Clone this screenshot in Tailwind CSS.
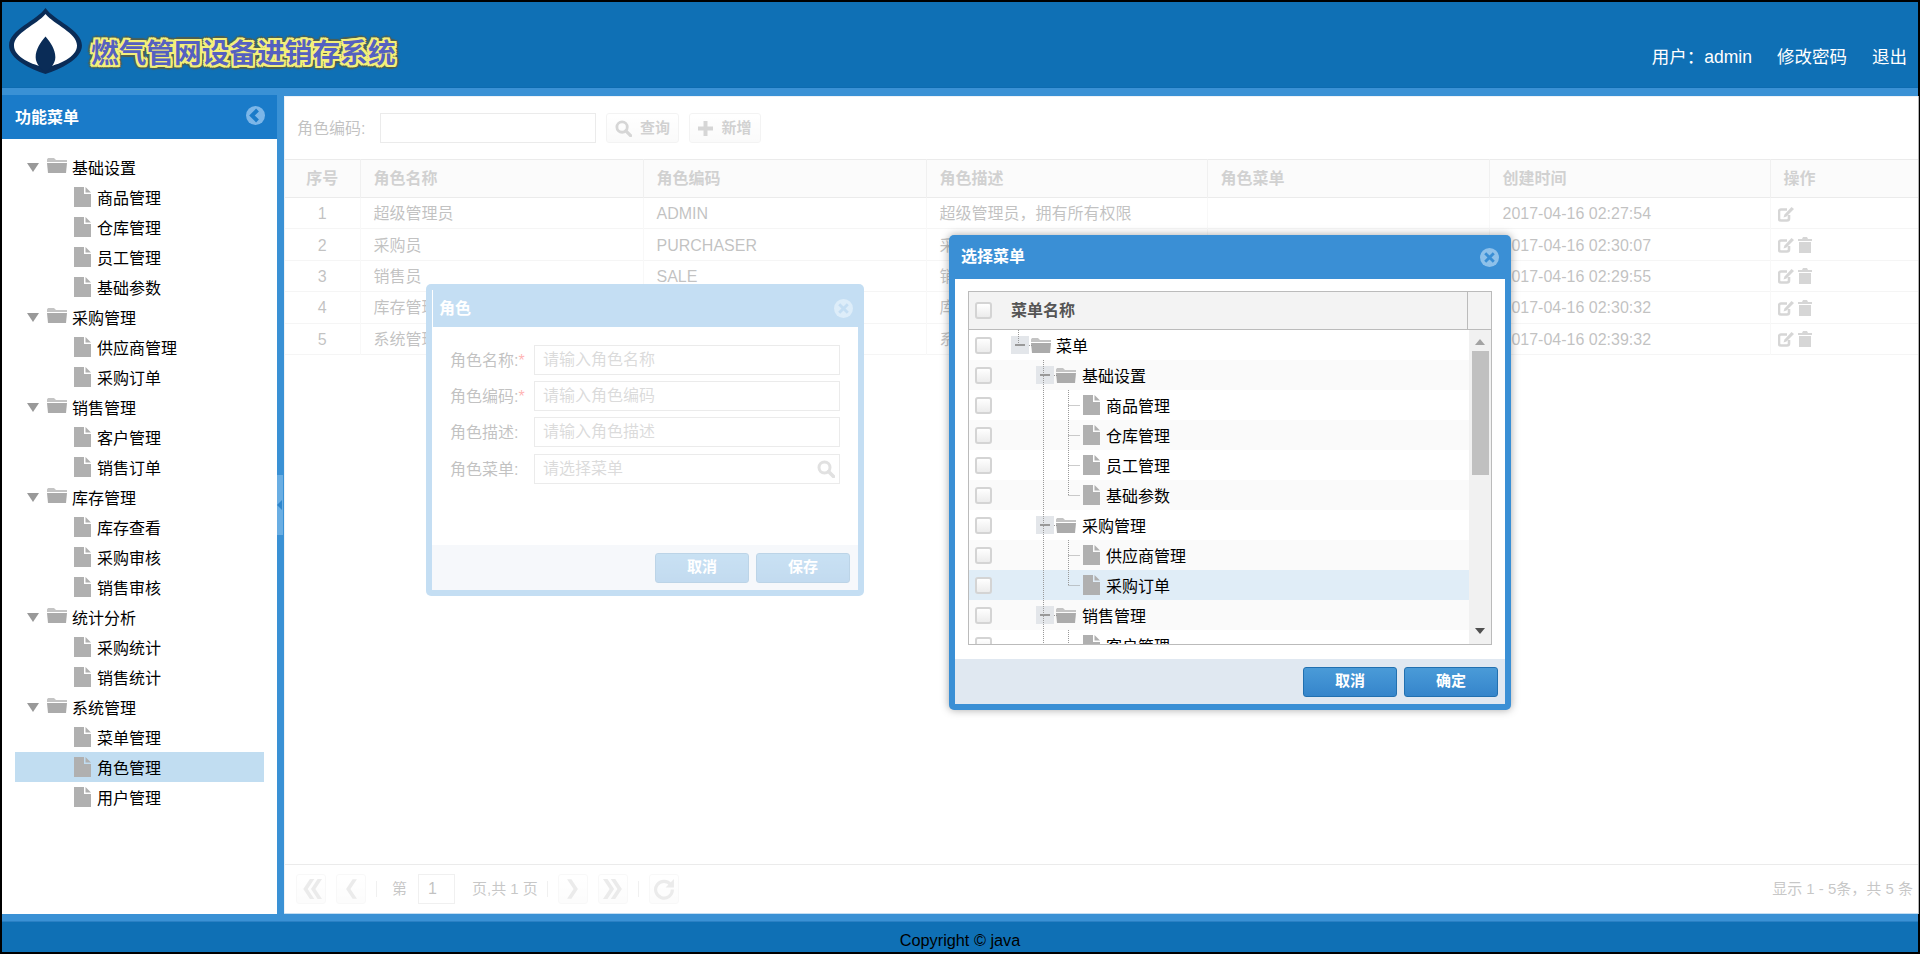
<!DOCTYPE html>
<html lang="zh-CN">
  <head>
    <meta charset="UTF-8" />
    <meta name="viewport" content="width=device-width, initial-scale=1.0" />
    <title>燃气管网设备进销存系统</title>
    <script src="https://cdn.jsdelivr.net/npm/@tailwindcss/browser@4"></script>
  </head>
  <body class="bg-black p-[2px] h-[954px] w-[1920px] overflow-hidden text-[16px] [font-family:'Liberation_Sans','Noto_Sans_CJK_SC',sans-serif]">
    <!-- shared icons -->
    <svg class="hidden">
      <symbol id="i-folder" viewBox="0 0 20 15"><path d="M0 1.5 1 0h6l2 2h11v2H0z" fill="#c4c4c4" /><path d="M0 5h20l-1 10H1z" fill="#ababab" /></symbol>
      <symbol id="i-file" viewBox="0 0 17 20"><path d="M0 0h10v7h7v13H0z" fill="#b0b0b0" /><path d="M11.5 0 17 5.5h-5.5z" fill="#b0b0b0" /></symbol>
      <symbol id="i-search" viewBox="0 0 18 18"><circle cx="7.5" cy="7.5" r="5.5" fill="none" stroke="currentColor" stroke-width="3" /><path d="m11.5 11.5 5 5" stroke="currentColor" stroke-width="3.5" stroke-linecap="round" /></symbol>
      <symbol id="i-edit" viewBox="0 0 16 15"><path d="M11 8v3.5a2 2 0 0 1-2 2H3a2 2 0 0 1-2-2v-7a2 2 0 0 1 2-2h6" fill="none" stroke="currentColor" stroke-width="2.6" /><path d="M13.5 0 16 2 8.5 9.5 5.5 10.5 6.5 7.5z" fill="currentColor" /></symbol>
      <symbol id="i-trash" viewBox="0 0 14 16"><path d="M5 0h4l1 2h4v2H0V2h4z" fill="currentColor" /><path d="M1 5h12v11H1z" fill="currentColor" /></symbol>
      <symbol id="i-close" viewBox="0 0 20 20"><circle cx="10" cy="10" r="10" fill="currentColor" /><path d="m5.5 5.5 9 9m0-9-9 9" stroke="#3a8fd5" stroke-width="3" /></symbol>
    </svg>

    <div class="h-[950px] w-[1916px] bg-[#3a91d5] flex flex-col">
      <!-- header -->
      <header class="h-[86px] bg-[#0f70b5] border-b border-[#0d6bb0] flex items-start justify-between text-white shrink-0">
        <div class="flex items-end pl-[7px] pt-[6px]">
          <svg class="w-[73px] h-[66px]" viewBox="0 0 74 67">
            <path d="M37 0C46 13 74 22 74 38 74 52 52 62 37 67 22 62 0 52 0 38 0 22 28 13 37 0Z" fill="#0a2c57" />
            <path d="M37 6C46 17 69 25 69 38 69 50 50 58 37 60 24 58 5 50 5 38 5 25 28 17 37 6Z" fill="#fff" />
            <path d="M37 29C42 35 47 42 47 50 47 57 41 62 37 66 33 62 27 57 27 50 27 42 32 35 37 29Z" fill="#0a2c57" />
          </svg>
          <span class="ml-[9px] mb-[2px] text-[27.7px] leading-[36px] font-bold text-[#5560c0] [text-shadow:1px_0_0_#f4f07a,-1px_0_0_#f4f07a,0_1px_0_#f4f07a,0_-1px_0_#f4f07a,2px_0_0_#f4f07a,-2px_0_0_#f4f07a,0_2px_0_#f4f07a,0_-2px_0_#f4f07a,2px_2px_0_#f4f07a,-2px_-2px_0_#f4f07a,2px_-2px_0_#f4f07a,-2px_2px_0_#f4f07a,3px_3px_1px_#4f5f50,-3px_-3px_1px_#4f5f50,3px_-3px_1px_#4f5f50,-3px_3px_1px_#4f5f50,4px_0_1px_#4f5f50,-4px_0_1px_#4f5f50,0_4px_1px_#4f5f50,0_-4px_1px_#4f5f50]">燃气管网设备进销存系统</span>
        </div>
        <div class="flex gap-[25px] pt-[43px] pr-[11px] text-[17.5px] leading-[24px]">
          <span>用户：admin</span>
          <span>修改密码</span>
          <span>退出</span>
        </div>
      </header>

      <div class="flex flex-1 pt-[8px] min-h-0">
        <!-- left menu -->
        <aside class="w-[275px] bg-white flex flex-col shrink-0 -mt-px -mb-px">
          <div class="h-[44px] bg-[#1a7bc9] flex items-center justify-between pl-[13px] pr-[12px] text-white font-bold">
            <span class="leading-[20px] pt-[2px]">功能菜单</span>
            <svg class="w-[19px] h-[19px] -mt-[3px]" viewBox="0 0 19 19">
              <circle cx="9.5" cy="9.5" r="9.5" fill="#7cb6e8" />
              <path d="M11.5 4 6 9.5l5.500 5.500" fill="none" stroke="#1a7bc9" stroke-width="4" />
            </svg>
          </div>
          <nav class="px-[13px] pt-[13px] text-black leading-[20px] [&_span]:pt-[4px]">
            <div class="h-[30px] flex items-center pl-[12px]"><svg class="w-[12px] h-[9px]" viewBox="0 0 12 9"><path d="M0 0h12L6 9z" fill="#999" /></svg><svg class="w-[20px] h-[15px] ml-[8px] -mt-[3px]"><use href="#i-folder" /></svg><span class="ml-[5px]">基础设置</span></div>
            <div class="h-[30px] flex items-center pl-[59px]"><svg class="w-[17px] h-[20px]"><use href="#i-file" /></svg><span class="ml-[6px]">商品管理</span></div>
            <div class="h-[30px] flex items-center pl-[59px]"><svg class="w-[17px] h-[20px]"><use href="#i-file" /></svg><span class="ml-[6px]">仓库管理</span></div>
            <div class="h-[30px] flex items-center pl-[59px]"><svg class="w-[17px] h-[20px]"><use href="#i-file" /></svg><span class="ml-[6px]">员工管理</span></div>
            <div class="h-[30px] flex items-center pl-[59px]"><svg class="w-[17px] h-[20px]"><use href="#i-file" /></svg><span class="ml-[6px]">基础参数</span></div>
            <div class="h-[30px] flex items-center pl-[12px]"><svg class="w-[12px] h-[9px]" viewBox="0 0 12 9"><path d="M0 0h12L6 9z" fill="#999" /></svg><svg class="w-[20px] h-[15px] ml-[8px] -mt-[3px]"><use href="#i-folder" /></svg><span class="ml-[5px]">采购管理</span></div>
            <div class="h-[30px] flex items-center pl-[59px]"><svg class="w-[17px] h-[20px]"><use href="#i-file" /></svg><span class="ml-[6px]">供应商管理</span></div>
            <div class="h-[30px] flex items-center pl-[59px]"><svg class="w-[17px] h-[20px]"><use href="#i-file" /></svg><span class="ml-[6px]">采购订单</span></div>
            <div class="h-[30px] flex items-center pl-[12px]"><svg class="w-[12px] h-[9px]" viewBox="0 0 12 9"><path d="M0 0h12L6 9z" fill="#999" /></svg><svg class="w-[20px] h-[15px] ml-[8px] -mt-[3px]"><use href="#i-folder" /></svg><span class="ml-[5px]">销售管理</span></div>
            <div class="h-[30px] flex items-center pl-[59px]"><svg class="w-[17px] h-[20px]"><use href="#i-file" /></svg><span class="ml-[6px]">客户管理</span></div>
            <div class="h-[30px] flex items-center pl-[59px]"><svg class="w-[17px] h-[20px]"><use href="#i-file" /></svg><span class="ml-[6px]">销售订单</span></div>
            <div class="h-[30px] flex items-center pl-[12px]"><svg class="w-[12px] h-[9px]" viewBox="0 0 12 9"><path d="M0 0h12L6 9z" fill="#999" /></svg><svg class="w-[20px] h-[15px] ml-[8px] -mt-[3px]"><use href="#i-folder" /></svg><span class="ml-[5px]">库存管理</span></div>
            <div class="h-[30px] flex items-center pl-[59px]"><svg class="w-[17px] h-[20px]"><use href="#i-file" /></svg><span class="ml-[6px]">库存查看</span></div>
            <div class="h-[30px] flex items-center pl-[59px]"><svg class="w-[17px] h-[20px]"><use href="#i-file" /></svg><span class="ml-[6px]">采购审核</span></div>
            <div class="h-[30px] flex items-center pl-[59px]"><svg class="w-[17px] h-[20px]"><use href="#i-file" /></svg><span class="ml-[6px]">销售审核</span></div>
            <div class="h-[30px] flex items-center pl-[12px]"><svg class="w-[12px] h-[9px]" viewBox="0 0 12 9"><path d="M0 0h12L6 9z" fill="#999" /></svg><svg class="w-[20px] h-[15px] ml-[8px] -mt-[3px]"><use href="#i-folder" /></svg><span class="ml-[5px]">统计分析</span></div>
            <div class="h-[30px] flex items-center pl-[59px]"><svg class="w-[17px] h-[20px]"><use href="#i-file" /></svg><span class="ml-[6px]">采购统计</span></div>
            <div class="h-[30px] flex items-center pl-[59px]"><svg class="w-[17px] h-[20px]"><use href="#i-file" /></svg><span class="ml-[6px]">销售统计</span></div>
            <div class="h-[30px] flex items-center pl-[12px]"><svg class="w-[12px] h-[9px]" viewBox="0 0 12 9"><path d="M0 0h12L6 9z" fill="#999" /></svg><svg class="w-[20px] h-[15px] ml-[8px] -mt-[3px]"><use href="#i-folder" /></svg><span class="ml-[5px]">系统管理</span></div>
            <div class="h-[30px] flex items-center pl-[59px]"><svg class="w-[17px] h-[20px]"><use href="#i-file" /></svg><span class="ml-[6px]">菜单管理</span></div>
            <div class="h-[30px] flex items-center pl-[59px] bg-[#c1ddf1]"><svg class="w-[17px] h-[20px]"><use href="#i-file" /></svg><span class="ml-[6px]">角色管理</span></div>
            <div class="h-[30px] flex items-center pl-[59px]"><svg class="w-[17px] h-[20px]"><use href="#i-file" /></svg><span class="ml-[6px]">用户管理</span></div>
          </nav>
        </aside>

        <!-- splitter -->
        <div class="w-[7px] shrink-0 flex items-center">
          <div class="w-[6px] h-[60px] bg-[#6aaee3] flex items-center">
            <svg class="w-[5px] h-[10px]" viewBox="0 0 5 10"><path d="M5 0v10L0 5z" fill="#2f86cc" /></svg>
          </div>
        </div>

        <!-- content -->
        <main class="relative flex-1 bg-white flex flex-col border-l border-t border-[#c4d4e4] min-w-0">
          <div class="h-[62px] flex items-center pl-[12px] gap-[10px] shrink-0">
            <span class="text-[#333] leading-[20px] w-[73px] pt-[2px]">角色编码:</span>
            <input class="w-[216px] h-[30px] border border-[#bbb] bg-white" />
            <button class="w-[73px] h-[30px] rounded-[3px] border border-[#d8d8d8] bg-linear-to-b from-white to-[#eee] flex items-center justify-center gap-[8px] font-bold text-[15px] text-[#666]"><svg class="w-[17px] h-[17px] text-[#777]"><use href="#i-search" /></svg>查询</button>
            <button class="w-[72px] h-[30px] rounded-[3px] border border-[#d8d8d8] bg-linear-to-b from-white to-[#eee] flex items-center justify-center gap-[8px] font-bold text-[15px] text-[#666]"><svg class="w-[15px] h-[15px]" viewBox="0 0 15 15"><path d="M5.500 0h4v5.500H15v4H9.500V15h-4V9.500H0v-4h5.500z" fill="#777" /></svg>新增</button>
          </div>

          <div class="flex-1 min-h-0">
            <table class="w-full table-fixed border-collapse">
              <colgroup>
                <col class="w-[75px]" />
                <col class="w-[283px]" />
                <col class="w-[283px]" />
                <col class="w-[281px]" />
                <col class="w-[282px]" />
                <col class="w-[281px]" />
                <col />
              </colgroup>
              <thead class="bg-[#f0f0f0] text-[#666]">
                <tr class="h-[38px] border-y border-[#bbb]">
                  <th class="font-bold">序号</th>
                  <th class="font-bold text-left px-[13px] border-l border-[#ccc]">角色名称</th>
                  <th class="font-bold text-left px-[13px] border-l border-[#ccc]">角色编码</th>
                  <th class="font-bold text-left px-[13px] border-l border-[#ccc]">角色描述</th>
                  <th class="font-bold text-left px-[13px] border-l border-[#ccc]">角色菜单</th>
                  <th class="font-bold text-left px-[13px] border-l border-[#ccc]">创建时间</th>
                  <th class="font-bold text-left px-[13px] border-l border-[#ccc]">操作</th>
                </tr>
              </thead>
              <tbody class="text-[#333] [&_td]:pt-[2px]">
                <tr class="h-[31.4px] border-b border-[#ddd]">
                  <td class="text-center">1</td>
                  <td class="px-[13px] border-l border-[#e6e6e6]">超级管理员</td>
                  <td class="px-[13px] border-l border-[#e6e6e6]">ADMIN</td>
                  <td class="px-[13px] border-l border-[#e6e6e6]">超级管理员，拥有所有权限</td>
                  <td class="px-[13px] border-l border-[#e6e6e6]"></td>
                  <td class="px-[13px] border-l border-[#e6e6e6]">2017-04-16 02:27:54</td>
                  <td class="pl-[7px] border-l border-[#e6e6e6]"><div class="flex gap-[4px] text-[#777]"><svg class="w-[16px] h-[15px]"><use href="#i-edit" /></svg></div></td>
                </tr>
                <tr class="h-[31.4px] border-b border-[#ddd]">
                  <td class="text-center">2</td>
                  <td class="px-[13px] border-l border-[#e6e6e6]">采购员</td>
                  <td class="px-[13px] border-l border-[#e6e6e6]">PURCHASER</td>
                  <td class="px-[13px] border-l border-[#e6e6e6]">采购员</td>
                  <td class="px-[13px] border-l border-[#e6e6e6]"></td>
                  <td class="px-[13px] border-l border-[#e6e6e6]">2017-04-16 02:30:07</td>
                  <td class="pl-[7px] border-l border-[#e6e6e6]"><div class="flex gap-[4px] text-[#777]"><svg class="w-[16px] h-[15px]"><use href="#i-edit" /></svg><svg class="w-[14px] h-[16px] -mt-[1px]"><use href="#i-trash" /></svg></div></td>
                </tr>
                <tr class="h-[31.4px] border-b border-[#ddd]">
                  <td class="text-center">3</td>
                  <td class="px-[13px] border-l border-[#e6e6e6]">销售员</td>
                  <td class="px-[13px] border-l border-[#e6e6e6]">SALE</td>
                  <td class="px-[13px] border-l border-[#e6e6e6]">销售员</td>
                  <td class="px-[13px] border-l border-[#e6e6e6]"></td>
                  <td class="px-[13px] border-l border-[#e6e6e6]">2017-04-16 02:29:55</td>
                  <td class="pl-[7px] border-l border-[#e6e6e6]"><div class="flex gap-[4px] text-[#777]"><svg class="w-[16px] h-[15px]"><use href="#i-edit" /></svg><svg class="w-[14px] h-[16px] -mt-[1px]"><use href="#i-trash" /></svg></div></td>
                </tr>
                <tr class="h-[31.4px] border-b border-[#ddd]">
                  <td class="text-center">4</td>
                  <td class="px-[13px] border-l border-[#e6e6e6]">库存管理员</td>
                  <td class="px-[13px] border-l border-[#e6e6e6]">STOCK</td>
                  <td class="px-[13px] border-l border-[#e6e6e6]">库存管理员</td>
                  <td class="px-[13px] border-l border-[#e6e6e6]"></td>
                  <td class="px-[13px] border-l border-[#e6e6e6]">2017-04-16 02:30:32</td>
                  <td class="pl-[7px] border-l border-[#e6e6e6]"><div class="flex gap-[4px] text-[#777]"><svg class="w-[16px] h-[15px]"><use href="#i-edit" /></svg><svg class="w-[14px] h-[16px] -mt-[1px]"><use href="#i-trash" /></svg></div></td>
                </tr>
                <tr class="h-[31.4px] border-b border-[#ddd]">
                  <td class="text-center">5</td>
                  <td class="px-[13px] border-l border-[#e6e6e6]">系统管理员</td>
                  <td class="px-[13px] border-l border-[#e6e6e6]">SYSTEM</td>
                  <td class="px-[13px] border-l border-[#e6e6e6]">系统管理员</td>
                  <td class="px-[13px] border-l border-[#e6e6e6]"></td>
                  <td class="px-[13px] border-l border-[#e6e6e6]">2017-04-16 02:39:32</td>
                  <td class="pl-[7px] border-l border-[#e6e6e6]"><div class="flex gap-[4px] text-[#777]"><svg class="w-[16px] h-[15px]"><use href="#i-edit" /></svg><svg class="w-[14px] h-[16px] -mt-[1px]"><use href="#i-trash" /></svg></div></td>
                </tr>
              </tbody>
            </table>
          </div>

          <!-- pager -->
          <div class="h-[49px] border-t border-[#bbb] flex items-center pl-[11px] pr-[5px] text-[15px] text-[#444] shrink-0">
            <button class="w-[30px] h-[30px] rounded-[3px] border border-[#e6e6e6] bg-linear-to-b from-white to-[#f4f4f4] flex items-center justify-center"><svg class="w-[22px] h-[20px]" viewBox="0 0 20 18"><path d="M9 0 3 9l6 9h4L7 9l6-9zM16 0l-6 9 6 9h4l-6-9 6-9z" fill="#bbb" /></svg></button>
            <button class="ml-[10px] w-[30px] h-[30px] rounded-[3px] border border-[#e6e6e6] bg-linear-to-b from-white to-[#f4f4f4] flex items-center justify-center"><svg class="w-[13px] h-[20px]" viewBox="0 0 12 18"><path d="M7 0 1 9l6 9h4L5 9l6-9z" fill="#bbb" /></svg></button>
            <span class="ml-[10px] w-px h-[16px] bg-[#ccc]"></span>
            <span class="ml-[15px]">第</span>
            <input class="ml-[11px] w-[37px] h-[30px] border border-[#ccc] px-[9px] text-[16px] text-[#333]" value="1" />
            <span class="ml-[17px]">页,共 1 页</span>
            <span class="ml-[9px] w-px h-[16px] bg-[#ccc]"></span>
            <button class="ml-[10px] w-[30px] h-[30px] rounded-[3px] border border-[#e6e6e6] bg-linear-to-b from-white to-[#f4f4f4] flex items-center justify-center"><svg class="w-[13px] h-[20px]" viewBox="0 0 12 18"><path d="M5 0l6 9-6 9H1l6-9-6-9z" fill="#bbb" /></svg></button>
            <button class="ml-[10px] w-[30px] h-[30px] rounded-[3px] border border-[#e6e6e6] bg-linear-to-b from-white to-[#f4f4f4] flex items-center justify-center"><svg class="w-[22px] h-[20px]" viewBox="0 0 18 18"><path d="M4 0l6 9-6 9H0l6-9-6-9zM11 0l6 9-6 9H7l6-9-6-9z" fill="#bbb" /></svg></button>
            <span class="ml-[10px] w-px h-[16px] bg-[#ccc]"></span>
            <button class="ml-[10px] w-[30px] h-[30px] rounded-[3px] border border-[#e6e6e6] bg-linear-to-b from-white to-[#f4f4f4] flex items-center justify-center"><svg class="w-[22px] h-[22px]" viewBox="0 0 21 21"><path d="M17 6.5A8 8 0 1 0 18.5 11" fill="none" stroke="#bbb" stroke-width="3" /><path d="M20 1v8h-8z" fill="#bbb" /></svg></button>
            <span class="ml-auto">显示 1 - 5条，共 5 条</span>
          </div>

          <!-- dialog behind the mask -->
          <section class="absolute left-[141px] top-[187px] w-[438px] h-[312px] rounded-[5px] bg-[#3a91d5] px-[6px] pb-[6px] flex flex-col">
            <div class="h-[37px] flex items-center justify-between pl-[6px] pr-[5px] text-white font-bold border-l border-white mt-[6px]">
              <span>角色</span>
              <svg class="w-[19px] h-[19px] text-[#8ec1ea]"><use href="#i-close" /></svg>
            </div>
            <div class="flex-1 bg-white flex flex-col">
              <form class="flex-1 pl-[18px] pt-[18px] text-[#333]">
                <div class="flex items-center h-[30px]"><label class="w-[84px] pt-[1px]">角色名称:<span class="text-[#f00]">*</span></label><input class="w-[306px] h-[30px] border border-[#bbb] px-[8px] placeholder:text-[#888]" placeholder="请输入角色名称" /></div>
                <div class="flex items-center h-[30px] mt-[6px]"><label class="w-[84px] pt-[1px]">角色编码:<span class="text-[#f00]">*</span></label><input class="w-[306px] h-[30px] border border-[#bbb] px-[8px] placeholder:text-[#888]" placeholder="请输入角色编码" /></div>
                <div class="flex items-center h-[30px] mt-[6px]"><label class="w-[84px] pt-[1px]">角色描述:</label><input class="w-[306px] h-[30px] border border-[#bbb] px-[8px] placeholder:text-[#888]" placeholder="请输入角色描述" /></div>
                <div class="flex items-center h-[30px] mt-[7px]"><label class="w-[84px] pt-[1px]">角色菜单:</label>
                  <div class="w-[306px] h-[30px] border border-[#bbb] flex items-center pr-[4px]"><input class="flex-1 min-w-0 h-full px-[8px] placeholder:text-[#888]" placeholder="请选择菜单" /><svg class="w-[18px] h-[18px] text-[#999]"><use href="#i-search" /></svg></div>
                </div>
              </form>
              <div class="h-[45px] bg-[#e0e8f1] flex items-center justify-end gap-[7px] pr-[8px]">
                <button class="w-[94px] h-[30px] rounded-[3px] border border-[#2170b0] bg-linear-to-b from-[#4a9bd8] to-[#3585cb] text-white font-bold text-[15px]">取消</button>
                <button class="w-[94px] h-[30px] rounded-[3px] border border-[#2170b0] bg-linear-to-b from-[#4a9bd8] to-[#3585cb] text-white font-bold text-[15px]">保存</button>
              </div>
            </div>
          </section>

          <!-- mask -->
          <div class="absolute -inset-px bg-white/70"></div>

          <!-- select menu dialog -->
          <section class="absolute left-[664px] top-[138px] w-[562px] h-[475px] rounded-[5px] bg-[#3a8fd5] px-[6px] pb-[6px] flex flex-col shadow-[0_0_8px_rgba(0,0,0,0.35)]">
            <div class="h-[44px] flex items-center justify-between pl-[6px] pr-[6px] text-white font-bold shrink-0">
              <span>选择菜单</span>
              <svg class="w-[19px] h-[19px] text-[#8ec1ea]"><use href="#i-close" /></svg>
            </div>
            <div class="flex-1 bg-white flex flex-col pt-[12px] min-h-0">
              <div class="mx-[13px] h-[354px] border border-[#bbb] flex flex-col">
                <div class="h-[38px] bg-[#f3f3f3] border-b border-[#bbb] flex items-center shrink-0">
                  <span class="ml-[6px] w-[17px] h-[17px] rounded-[3px] border-2 border-[#d4d4d4] bg-linear-to-b from-white to-[#ececec]"></span>
                  <span class="ml-[19px] font-bold text-[#555]">菜单名称</span>
                  <span class="ml-auto mr-[23px] w-px h-full bg-[#bbb]"></span>
                </div>
                <div class="flex flex-1 min-h-0">
                  <div class="relative flex-1 overflow-hidden text-black leading-[20px]">
                    <div class="h-[30px] flex items-center pl-[6px]"><span class="w-[17px] h-[17px] rounded-[3px] border-2 border-[#d4d4d4] bg-linear-to-b from-white to-[#ececec]"></span><span class="relative ml-[19px] w-[18px] h-[18px] bg-[#e3e6ea] flex items-center justify-center"><span class="w-[10px] h-[2px] bg-[#999]"></span></span><svg class="ml-[2px] w-[20px] h-[15px]"><use href="#i-folder" /></svg><span class="ml-[5px] pt-[3px]">菜单</span></div>
                    <div class="h-[30px] flex items-center pl-[6px] bg-[#fafafa]"><span class="w-[17px] h-[17px] rounded-[3px] border-2 border-[#d4d4d4] bg-linear-to-b from-white to-[#ececec]"></span><span class="relative ml-[44px] w-[18px] h-[18px] bg-[#e3e6ea] flex items-center justify-center"><span class="w-[10px] h-[2px] bg-[#999]"></span></span><svg class="ml-[2px] w-[20px] h-[15px]"><use href="#i-folder" /></svg><span class="ml-[6px] pt-[3px]">基础设置</span></div>
                    <div class="h-[30px] flex items-center pl-[6px]"><span class="w-[17px] h-[17px] rounded-[3px] border-2 border-[#d4d4d4] bg-linear-to-b from-white to-[#ececec]"></span><svg class="ml-[91px] w-[17px] h-[20px]"><use href="#i-file" /></svg><span class="ml-[6px] pt-[3px]">商品管理</span></div>
                    <div class="h-[30px] flex items-center pl-[6px] bg-[#fafafa]"><span class="w-[17px] h-[17px] rounded-[3px] border-2 border-[#d4d4d4] bg-linear-to-b from-white to-[#ececec]"></span><svg class="ml-[91px] w-[17px] h-[20px]"><use href="#i-file" /></svg><span class="ml-[6px] pt-[3px]">仓库管理</span></div>
                    <div class="h-[30px] flex items-center pl-[6px]"><span class="w-[17px] h-[17px] rounded-[3px] border-2 border-[#d4d4d4] bg-linear-to-b from-white to-[#ececec]"></span><svg class="ml-[91px] w-[17px] h-[20px]"><use href="#i-file" /></svg><span class="ml-[6px] pt-[3px]">员工管理</span></div>
                    <div class="h-[30px] flex items-center pl-[6px] bg-[#fafafa]"><span class="w-[17px] h-[17px] rounded-[3px] border-2 border-[#d4d4d4] bg-linear-to-b from-white to-[#ececec]"></span><svg class="ml-[91px] w-[17px] h-[20px]"><use href="#i-file" /></svg><span class="ml-[6px] pt-[3px]">基础参数</span></div>
                    <div class="h-[30px] flex items-center pl-[6px]"><span class="w-[17px] h-[17px] rounded-[3px] border-2 border-[#d4d4d4] bg-linear-to-b from-white to-[#ececec]"></span><span class="relative ml-[44px] w-[18px] h-[18px] bg-[#e3e6ea] flex items-center justify-center"><span class="w-[10px] h-[2px] bg-[#999]"></span></span><svg class="ml-[2px] w-[20px] h-[15px]"><use href="#i-folder" /></svg><span class="ml-[6px] pt-[3px]">采购管理</span></div>
                    <div class="h-[30px] flex items-center pl-[6px] bg-[#fafafa]"><span class="w-[17px] h-[17px] rounded-[3px] border-2 border-[#d4d4d4] bg-linear-to-b from-white to-[#ececec]"></span><svg class="ml-[91px] w-[17px] h-[20px]"><use href="#i-file" /></svg><span class="ml-[6px] pt-[3px]">供应商管理</span></div>
                    <div class="h-[30px] flex items-center pl-[6px] bg-[#e0edf7]"><span class="w-[17px] h-[17px] rounded-[3px] border-2 border-[#d4d4d4] bg-linear-to-b from-white to-[#ececec]"></span><svg class="ml-[91px] w-[17px] h-[20px]"><use href="#i-file" /></svg><span class="ml-[6px] pt-[3px]">采购订单</span></div>
                    <div class="h-[30px] flex items-center pl-[6px] bg-[#fafafa]"><span class="w-[17px] h-[17px] rounded-[3px] border-2 border-[#d4d4d4] bg-linear-to-b from-white to-[#ececec]"></span><span class="relative ml-[44px] w-[18px] h-[18px] bg-[#e3e6ea] flex items-center justify-center"><span class="w-[10px] h-[2px] bg-[#999]"></span></span><svg class="ml-[2px] w-[20px] h-[15px]"><use href="#i-folder" /></svg><span class="ml-[6px] pt-[3px]">销售管理</span></div>
                    <div class="h-[30px] flex items-center pl-[6px]"><span class="w-[17px] h-[17px] rounded-[3px] border-2 border-[#d4d4d4] bg-linear-to-b from-white to-[#ececec]"></span><svg class="ml-[91px] w-[17px] h-[20px]"><use href="#i-file" /></svg><span class="ml-[6px] pt-[3px]">客户管理</span></div>
                    <!-- tree connectors -->
                    <svg class="absolute left-0 top-0 w-[300px] h-[316px]" fill="none" stroke="#999" stroke-dasharray="1 1">
                      <path d="M49.5 0v15M74.5 30V316M99.5 60v105M99.5 75.500h12M99.5 105.500h12M99.5 135.500h12M99.5 165.500h12M99.5 210v45M99.5 225.500h12M99.5 255.500h12M99.5 300v16M60 15.500h3M85 45.500h3M85 195.500h3M85 285.500h3" />
                    </svg>
                  </div>
                  <div class="w-[22px] shrink-0 bg-[#f1f1f1] flex flex-col items-center">
                    <svg class="w-[10px] h-[6px] mt-[9px] mb-[6px]" viewBox="0 0 10 6"><path d="M5 0l5 6H0z" fill="#a3a3a3" /></svg>
                    <span class="w-[17px] h-[124px] bg-[#c0c0c0]"></span>
                    <svg class="w-[10px] h-[6px] mt-auto mb-[10px]" viewBox="0 0 10 6"><path d="M0 0h10L5 6z" fill="#505050" /></svg>
                  </div>
                </div>
              </div>
              <div class="mt-auto h-[45px] bg-[#e0e8f1] flex items-center justify-end gap-[7px] pr-[7px] shrink-0">
                <button class="w-[94px] h-[30px] rounded-[3px] border border-[#2170b0] bg-linear-to-b from-[#4a9bd8] to-[#3585cb] text-white font-bold text-[15px]">取消</button>
                <button class="w-[94px] h-[30px] rounded-[3px] border border-[#2170b0] bg-linear-to-b from-[#4a9bd8] to-[#3585cb] text-white font-bold text-[15px]">确定</button>
              </div>
            </div>
          </section>
        </main>
      </div>

      <!-- footer -->
      <footer class="h-[31px] mt-[8px] bg-[#0f70b5] border-t border-[#2a80c4] text-center text-black text-[16.3px] leading-[20px] pt-[8px] shrink-0">Copyright © java</footer>
    </div>
  </body>
</html>
